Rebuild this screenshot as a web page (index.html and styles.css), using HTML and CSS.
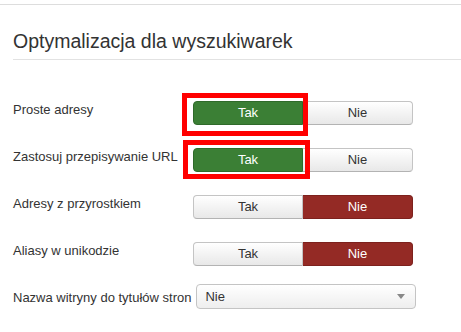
FILE: index.html
```html
<!DOCTYPE html>
<html>
<head>
<meta charset="utf-8">
<link rel="stylesheet" href="styles.css">
</head>
<body>
<div class="topline"></div>
<div class="page">
  <h2 class="legend">Optymalizacja dla wyszukiwarek</h2>
  <div class="row">
    <label class="lbl">Proste adresy</label>
    <div class="yesno">
      <span class="btn yes-on">Tak</span><span class="btn">Nie</span>
      <span class="mark mark1"></span>
    </div>
  </div>
  <div class="row">
    <label class="lbl">Zastosuj przepisywanie URL</label>
    <div class="yesno">
      <span class="btn yes-on">Tak</span><span class="btn">Nie</span>
      <span class="mark mark2"></span>
    </div>
  </div>
  <div class="row">
    <label class="lbl">Adresy z przyrostkiem</label>
    <div class="yesno">
      <span class="btn">Tak</span><span class="btn no-on">Nie</span>
    </div>
  </div>
  <div class="row">
    <label class="lbl">Aliasy w unikodzie</label>
    <div class="yesno">
      <span class="btn">Tak</span><span class="btn no-on">Nie</span>
    </div>
  </div>
  <div class="row row-select">
    <label class="lbl-auto">Nazwa witryny do tytułów stron</label>
    <div class="select"><span>Nie</span><span class="caret"></span></div>
  </div>
</div>
</body>
</html>
```
FILE: styles.css
```css
html, body {
  margin: 0;
  padding: 0;
  background: #fff;
}
body {
  font-family: "Liberation Sans", Arial, sans-serif;
  font-size: 13px;
  line-height: 18px;
  color: #333;
}
.topline {
  margin-top: 4px;
  height: 1px;
  background: #dddddd;
}
.page {
  padding-left: 13px;
}
.legend {
  margin: 18px 0 0 0;
  font-size: 19.5px;
  font-weight: normal;
  line-height: 36px;
  color: #333;
  border-bottom: 1px solid #e2e2e2;
}
.row {
  display: flex;
  align-items: flex-start;
  margin-top: 23px;
}
.legend + .row {
  margin-top: 41px;
}
.lbl {
  width: 180px;
  flex: none;
}
.yesno {
  position: relative;
  display: flex;
  width: 220px;
}
.btn {
  box-sizing: border-box;
  width: 110px;
  height: 24px;
  line-height: 22px;
  text-align: center;
  border: 1px solid #c4c4c4;
  border-bottom-color: #b3b3b3;
  background: linear-gradient(#ffffff, #e8e8e8);
  color: #333;
}
.btn:first-child {
  border-radius: 4px 0 0 4px;
}
.btn:nth-child(2) {
  border-radius: 0 4px 4px 0;
  border-left: none;
}
.btn.yes-on {
  background: #3b7f35;
  border-color: #2f6a2a;
  color: #fff;
}
.btn.no-on {
  background: #942a25;
  border-color: #7d211d;
  color: #fff;
}
.mark {
  position: absolute;
  box-sizing: border-box;
  border: 5px solid #ff0000;
}
.mark1 {
  left: -11px;
  top: -8px;
  width: 126px;
  height: 43px;
}
.mark2 {
  left: -10px;
  top: -8px;
  width: 127px;
  height: 39px;
}
.row-select {
  align-items: center;
  margin-top: 18px;
}
.lbl-auto {
  margin-right: 5px;
  padding-top: 2px;
}
.select {
  box-sizing: border-box;
  width: 220px;
  height: 25px;
  border: 1px solid #c4c4c4;
  border-radius: 4px;
  background: linear-gradient(#ffffff, #eeeeee);
  display: flex;
  align-items: center;
  justify-content: space-between;
  padding: 0 10px 0 8px;
}
.caret {
  width: 0;
  height: 0;
  border-left: 4px solid transparent;
  border-right: 4px solid transparent;
  border-top: 5px solid #888;
}
```
